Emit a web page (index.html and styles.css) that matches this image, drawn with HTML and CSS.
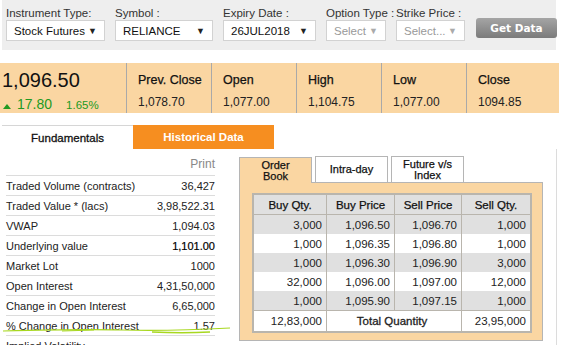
FILE: index.html
```html
<!DOCTYPE html>
<html lang="en">
<head>
    <meta charset="UTF-8">
    <meta name="viewport" content="width=device-width, initial-scale=1.0">
    <title>Stock Futures - RELIANCE</title>
    <link rel="stylesheet" href="styles.css">
</head>
<body>
    <!-- Search bar -->
    <div class="toolbar">
        <div class="field w99">
            <label>Instrument Type:</label>
            <div class="select"><span>Stock Futures</span><span class="arrow">&#9660;</span></div>
        </div>
        <div class="field w98">
            <label>Symbol :</label>
            <div class="select"><span>RELIANCE</span><span class="arrow">&#9660;</span></div>
        </div>
        <div class="field w93">
            <label>Expiry Date :</label>
            <div class="select"><span>26JUL2018</span><span class="arrow">&#9660;</span></div>
        </div>
        <div class="field w60">
            <label>Option Type :</label>
            <div class="select disabled"><span>Select</span><span class="arrow">&#9660;</span></div>
        </div>
        <div class="field w69">
            <label>Strike Price :</label>
            <div class="select disabled"><span>Select...</span><span class="arrow">&#9660;</span></div>
        </div>
        <button class="get-data">Get Data</button>
    </div>

    <!-- Quote strip -->
    <div class="quote">
        <div class="last">
            <div class="last-price">1,096.50</div>
            <div class="change"><span class="up"></span><span class="chg">17.80</span><span class="pct">1.65%</span></div>
        </div>
        <div class="stat"><div class="stat-label">Prev. Close</div><div class="stat-value">1,078.70</div></div>
        <div class="stat"><div class="stat-label">Open</div><div class="stat-value">1,077.00</div></div>
        <div class="stat"><div class="stat-label">High</div><div class="stat-value">1,104.75</div></div>
        <div class="stat"><div class="stat-label">Low</div><div class="stat-value">1,077.00</div></div>
        <div class="stat last-stat"><div class="stat-label">Close</div><div class="stat-value">1094.85</div></div>
    </div>

    <div class="main-tabs">
        <div class="main-tab active">Fundamentals</div>
        <div class="main-tab orange">Historical Data</div>
    </div>

    <div class="content">
        <div class="fundamentals">
            <div class="print">Print</div>
            <table class="fund-table">
                <tr><td>Traded Volume (contracts)</td><td>36,427</td></tr>
                <tr><td>Traded Value * (lacs)</td><td>3,98,522.31</td></tr>
                <tr><td>VWAP</td><td>1,094.03</td></tr>
                <tr><td>Underlying value</td><td class="strong">1,101.00</td></tr>
                <tr><td>Market Lot</td><td>1000</td></tr>
                <tr><td>Open Interest</td><td>4,31,50,000</td></tr>
                <tr><td>Change in Open Interest</td><td>6,65,000</td></tr>
                <tr class="marked"><td>% Change in Open Interest</td><td>1.57</td></tr>
                <tr><td>Implied Volatility</td><td>-</td></tr>
            </table>
            <svg class="scribble" width="232" height="12" viewBox="0 0 232 12">
                <path d="M1 5 C40 4 80 3 120 4 S190 4 228 2" stroke="#a8d820" stroke-width="1.2" fill="none"/>
                <path d="M150 6 C170 7 190 7 208 6" stroke="#a8d820" stroke-width="1.6" fill="none"/>
                <path d="M60 5 L92 4" stroke="#a8d820" stroke-width="1" fill="none"/>
            </svg>
        </div>

        <div class="order-book">
            <div class="ob-tabs">
                <div class="ob-tab active">Order<br>Book</div>
                <div class="ob-tab">Intra-day</div>
                <div class="ob-tab">Future v/s<br>Index</div>
            </div>
            <div class="ob-panel">
                <table class="ob-table">
                    <thead>
                        <tr><th>Buy Qty.</th><th>Buy Price</th><th>Sell Price</th><th>Sell Qty.</th></tr>
                    </thead>
                    <tbody>
                        <tr class="alt"><td>3,000</td><td>1,096.50</td><td>1,096.70</td><td>1,000</td></tr>
                        <tr><td>1,000</td><td>1,096.35</td><td>1,096.80</td><td>1,000</td></tr>
                        <tr class="alt"><td>1,000</td><td>1,096.30</td><td>1,096.90</td><td>3,000</td></tr>
                        <tr><td>32,000</td><td>1,096.00</td><td>1,097.00</td><td>12,000</td></tr>
                        <tr class="alt"><td>1,000</td><td>1,095.90</td><td>1,097.15</td><td>1,000</td></tr>
                        <tr class="total"><td>12,83,000</td><td colspan="2" class="center">Total Quantity</td><td>23,95,000</td></tr>
                    </tbody>
                </table>
            </div>
        </div>
        <div class="divider"></div>
    </div>
</body>
</html>
```

FILE: styles.css
```css
body { margin: 0; font-family: "Liberation Sans", Arial, sans-serif; font-size: 11px; color: #222; background: #fff; width: 561px; overflow: hidden; }

/* toolbar */
.toolbar { display: flex; align-items: flex-start; gap: 10px; width: 554px; height: 50px; margin-left: 2px; padding-left: 4px; background: #eeeeee; box-sizing: border-box; }
.field { flex: none; display: flex; flex-direction: column; padding-top: 7px; }
.field label { white-space: nowrap; font-size: 11.5px; color: #333; line-height: 13px; }
.w99 { width: 99px; } .w98 { width: 98px; } .w93 { width: 93px; } .w60 { width: 60px; } .w69 { width: 69px; }
.select { display: flex; justify-content: space-between; align-items: center; height: 21px; padding: 0 7px 0 7px; background: #fff; border: 1px solid #d2d2d2; box-sizing: border-box; font-size: 11.5px; color: #111; }
.select .arrow { font-size: 9px; color: #222; }
.select.disabled { color: #999; }
.select.disabled .arrow { color: #aaa; }
.get-data { flex: none; margin: 18px 0 0 1px; width: 81px; height: 20px; padding: 0; border: none; border-radius: 3px; background: linear-gradient(#a5a5a5, #7b7b7b); color: #fff; font-family: "DejaVu Sans", sans-serif; font-weight: bold; font-size: 10.5px; }

/* quote strip */
.quote { display: flex; width: 559px; height: 50px; margin-top: 13px; background: #fad6a2; }
.last { width: 126px; flex: none; padding-left: 2px; box-sizing: border-box; }
.last-price { font-size: 20px; line-height: 20px; margin-top: 7px; color: #111; }
.change { display: flex; align-items: baseline; margin-top: 6px; color: #229a22; }
.up { width: 0; height: 0; border-left: 4px solid transparent; border-right: 4px solid transparent; border-bottom: 5px solid #229a22; margin: 0 6px 0 1px; }
.chg { font-size: 14px; margin-right: 14px; }
.pct { font-size: 11.5px; }
.stat { width: 85px; flex: none; border-left: 1px solid #a9a9a9; box-sizing: border-box; padding: 10px 0 0 11px; }
.last-stat { flex: 1; }
.stat-label { font-size: 12.5px; color: #111; line-height: 15px; -webkit-text-stroke: 0.25px #111; }
.stat-value { font-size: 12px; margin-top: 7px; color: #222; }

/* main tabs */
.main-tabs { display: flex; margin-top: 12px; height: 24px; }
.main-tab { display: flex; align-items: center; justify-content: center; font-size: 11.5px; }
.main-tab.active { width: 131px; margin-left: 2px; border-top: 1px solid #d6d6d6; color: #111; -webkit-text-stroke: 0.3px #111; }
.main-tab.orange { width: 141px; background: #f68e20; color: #fff; font-weight: bold; }

/* content */
.content { position: relative; display: flex; height: 196px; }
.fundamentals { position: relative; width: 209px; margin-left: 6px; flex: none; }
.print { text-align: right; color: #888; font-size: 12px; height: 26px; line-height: 30px; }
.fund-table { width: 100%; border-collapse: collapse; }
.fund-table td { height: 19px; padding: 0; border-top: 1px solid #dcdcdc; font-size: 11px; color: #222; white-space: nowrap; }
.fund-table td:last-child { text-align: right; }
.fund-table td.strong { color: #000; -webkit-text-stroke: 0.2px #000; }
.scribble { position: absolute; left: -4px; top: 177px; }

.order-book { margin-left: 24px; padding-top: 7px; flex: none; }
.ob-tabs { display: flex; gap: 3px; }
.ob-tab { width: 73px; height: 26px; display: flex; align-items: center; justify-content: center; text-align: center; line-height: 11px; font-size: 11px; color: #111; -webkit-text-stroke: 0.25px #111; background: #fff; border: 1px solid #b5b5b5; border-bottom: none; box-sizing: border-box; }
.ob-tab.active { background: #fad6a2; position: relative; top: 1px; }
.ob-panel { width: 304px; height: 159px; background: #fad6a2; border: 1px solid #b5b5b5; box-sizing: border-box; padding: 10px 0 0 12px; }
.ob-table { width: 280px; border-collapse: collapse; border: 2px solid #b9b5ad; }
.ob-table th { height: 19px; padding: 0; background: #e0e0e0; font-size: 11.5px; font-weight: normal; color: #111; -webkit-text-stroke: 0.25px #111; border: 1px solid #b9b5ad; }
.ob-table td { height: 19px; padding: 0 4px 0 0; text-align: right; background: #fff; font-size: 11.5px; color: #222; border-left: 1px solid #b9b5ad; border-right: 1px solid #b9b5ad; }
.ob-table tr.alt td { background: #e0e0e0; }
.ob-table tr.total td { height: 20px; border-top: 1px solid #b9b5ad; }
.ob-table td.center { text-align: center; -webkit-text-stroke: 0.3px #222; }
.ob-table th:nth-child(1) { width: 72px; } .ob-table th:nth-child(2) { width: 67px; } .ob-table th:nth-child(3) { width: 66px; }
.divider { position: absolute; left: 556px; top: 0; bottom: 0; border-left: 1px solid #dcdcdc; }
```
